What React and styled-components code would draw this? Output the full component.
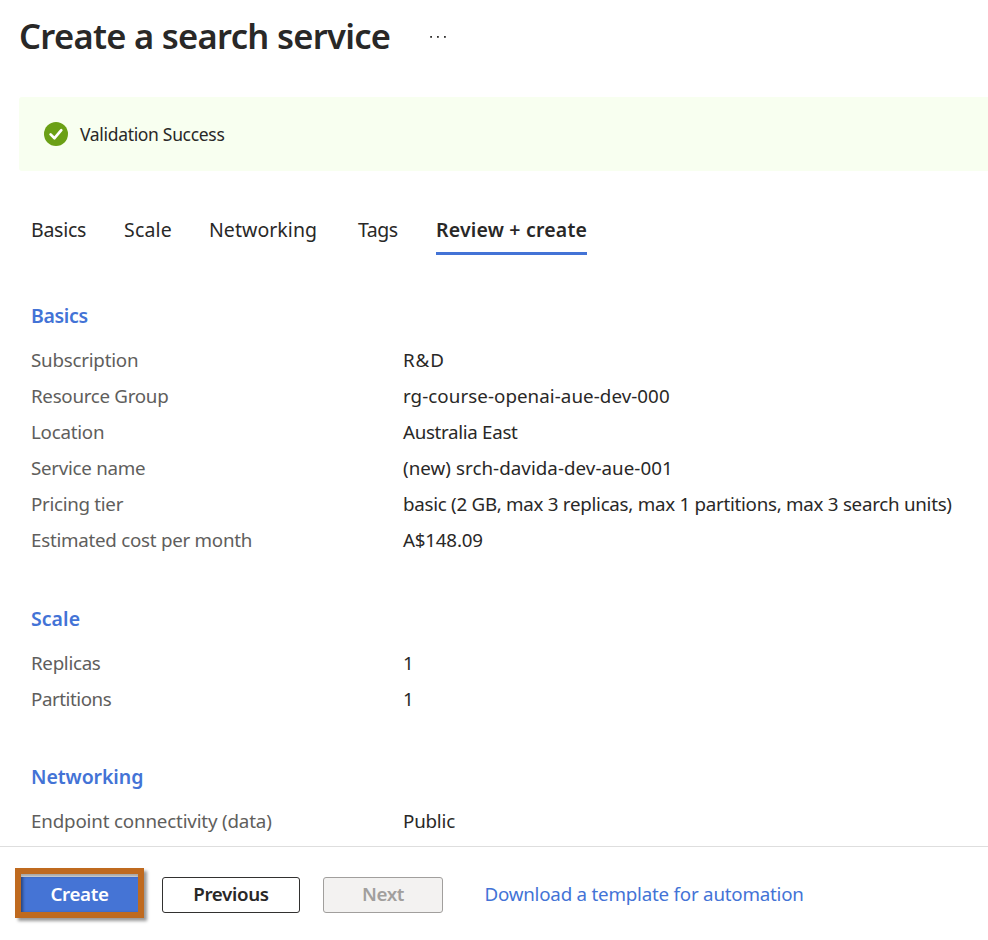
import React from "react";
import styled, { createGlobalStyle, css } from "styled-components";

const GlobalStyle = createGlobalStyle`
  * { box-sizing: border-box; }
  body {
    margin: 0;
    background: #fff;
    color: #292827;
    font-family: "Noto Sans", "Open Sans", sans-serif;
    overflow: hidden;
  }
`;

const tracking = css`
  letter-spacing: ${(p) => p.$track || 0}px;
`;

const Page = styled.div`
  display: flex;
  flex-direction: column;
  width: 988px;
  height: 940px;
  overflow: hidden;
`;

const Header = styled.header`
  display: flex;
  align-items: center;
  height: 73px;
  padding-left: 19px;
  flex: none;
`;

const Title = styled.h1`
  margin: 0;
  width: 410px;
  padding: 0 0 2px;
  font-size: 34.5px;
  line-height: 44px;
  font-weight: 600;
  letter-spacing: -0.69px;
  white-space: nowrap;
`;

const MoreButton = styled.button`
  display: flex;
  padding: 0;
  border: 0;
  background: none;
`;

const Banner = styled.div`
  display: flex;
  align-items: center;
  gap: 12px;
  flex: none;
  height: 74px;
  margin: 24px 0 0 19px;
  padding-left: 25px;
  border-radius: 3px 0 0 3px;
  background: #f8fff0;
`;

const BannerText = styled.span`
  font-size: 17.5px;
  line-height: 24px;
  letter-spacing: -0.32px;
`;

const Tabs = styled.nav`
  display: flex;
  flex: none;
  margin: 41px 0 0 31px;
`;

const Tab = styled.a`
  height: 43px;
  margin-right: ${(p) => p.$gap}px;
  width: ${(p) => p.$width}px;
  border-bottom: 3px solid ${(p) => (p.$active ? "#4373d6" : "transparent")};
  font-size: 19.5px;
  line-height: 36px;
  font-weight: ${(p) => (p.$active ? 600 : 400)};
  white-space: nowrap;
  ${tracking}
`;

const Content = styled.main`
  display: flex;
  flex-direction: column;
  gap: 42.6px;
  flex: 1;
  min-height: 0;
  padding: 43px 0 0 31px;
  overflow: hidden;
`;

const Heading = styled.h2`
  margin: 0 0 8px;
  font-size: 19.5px;
  line-height: 36px;
  font-weight: 600;
  color: #4373d6;
  ${tracking}
`;

const Row = styled.div`
  display: grid;
  grid-template-columns: 372px 1fr;
  font-size: 18.75px;
  line-height: 36px;
  white-space: nowrap;
`;

const Label = styled.span`
  color: #605e5c;
  ${tracking}
`;

const Value = styled.span`
  ${tracking}
`;

const Footer = styled.footer`
  display: flex;
  align-items: center;
  flex: none;
  height: 94px;
  padding: 3px 0 0 15px;
  border-top: 1px solid #dedede;
`;

const Highlight = styled.div`
  display: flex;
  align-items: flex-end;
  width: 129px;
  height: 50px;
  margin: -4px 18px 0 0;
  border: 6px solid #bf6a1f;
  box-shadow: 3px 3px 3px rgba(0, 0, 0, 0.4), inset 0 3px 3px rgba(0, 0, 0, 0.35);
`;

const Button = styled.button`
  width: ${(p) => p.$width}px;
  height: 36px;
  margin: 0;
  padding: 0 0 2px;
  border: 1px solid #323130;
  border-radius: 3px;
  background: #fff;
  color: #292827;
  font: 600 18.75px/32px "Noto Sans", "Open Sans", sans-serif;
  ${tracking}
`;

const PrimaryButton = styled(Button)`
  height: 35px;
  border: 0;
  border-radius: 0;
  background: #4574d5;
  color: #fff;
  box-shadow: inset 3px 0 3px -1px rgba(0, 0, 0, 0.4);
`;

const DisabledButton = styled(Button)`
  margin-left: 23px;
  border-color: #a19f9d;
  background: #f3f2f1;
  color: #a19f9d;
`;

const TemplateLink = styled.a`
  margin: -3px 0 0 41.5px;
  color: #4373d6;
  font-size: 18.75px;
  line-height: 36px;
  letter-spacing: -0.22px;
  white-space: nowrap;
`;

const tabs = [
  { text: "Basics", width: 56, gap: 37, track: -0.27 },
  { text: "Scale", width: 48, gap: 37, track: 0.2 },
  { text: "Networking", width: 109, gap: 40, track: 0.05 },
  { text: "Tags", width: 41, gap: 37, track: -0.5 },
  { text: "Review + create", width: 151, gap: 0, track: 0.19, active: true },
];

const sections = [
  {
    title: "Basics",
    track: -0.35,
    rows: [
      ["Subscription", -0.23, "R&D", 0.9],
      ["Resource Group", -0.29, "rg-course-openai-aue-dev-000", 0.06],
      ["Location", -0.25, "Australia East", -0.32],
      ["Service name", -0.28, "(new) srch-davida-dev-aue-001", 0.05],
      ["Pricing tier", -0.3, "basic (2 GB, max 3 replicas, max 1 partitions, max 3 search units)", -0.27],
      ["Estimated cost per month", -0.26, "A$148.09", -0.2],
    ],
  },
  {
    title: "Scale",
    track: 0.05,
    rows: [
      ["Replicas", -0.3, "1", 0],
      ["Partitions", -0.45, "1", 0],
    ],
  },
  {
    title: "Networking",
    track: -0.08,
    rows: [["Endpoint connectivity (data)", -0.17, "Public", -0.2]],
  },
];

function SuccessIcon() {
  return (
    <svg width="24" height="24" viewBox="0 0 24 24" aria-hidden="true">
      <circle cx="12" cy="12" r="12" fill="#6ba016" />
      <path d="M6.6 12.4 10.5 16.2 17.3 8.2" fill="none" stroke="#fff" strokeWidth="2.7" strokeLinecap="round" strokeLinejoin="round" />
    </svg>
  );
}

function MoreIcon() {
  return (
    <svg width="18" height="4" viewBox="0 0 18 4" fill="#323130" aria-hidden="true">
      <rect x="1.2" y="1" width="1.8" height="1.8" />
      <rect x="8" y="1" width="1.8" height="1.8" />
      <rect x="15" y="1" width="1.8" height="1.8" />
    </svg>
  );
}

export default function App() {
  return (
    <Page>
      <GlobalStyle />
      <Header>
        <Title>Create a search service</Title>
        <MoreButton aria-label="More">
          <MoreIcon />
        </MoreButton>
      </Header>
      <Banner>
        <SuccessIcon />
        <BannerText>Validation Success</BannerText>
      </Banner>
      <Tabs>
        {tabs.map((t) => (
          <Tab key={t.text} $width={t.width} $gap={t.gap} $track={t.track} $active={t.active}>
            {t.text}
          </Tab>
        ))}
      </Tabs>
      <Content>
        {sections.map((s) => (
          <section key={s.title}>
            <Heading $track={s.track}>{s.title}</Heading>
            {s.rows.map(([label, labelTrack, value, valueTrack]) => (
              <Row key={label}>
                <Label $track={labelTrack}>{label}</Label>
                <Value $track={valueTrack}>{value}</Value>
              </Row>
            ))}
          </section>
        ))}
      </Content>
      <Footer>
        <Highlight>
          <PrimaryButton $width={117} $track={-0.34}>Create</PrimaryButton>
        </Highlight>
        <Button $width={138} $track={-0.34}>Previous</Button>
        <DisabledButton disabled $width={120} $track={-0.34}>Next</DisabledButton>
        <TemplateLink>Download a template for automation</TemplateLink>
      </Footer>
    </Page>
  );
}
